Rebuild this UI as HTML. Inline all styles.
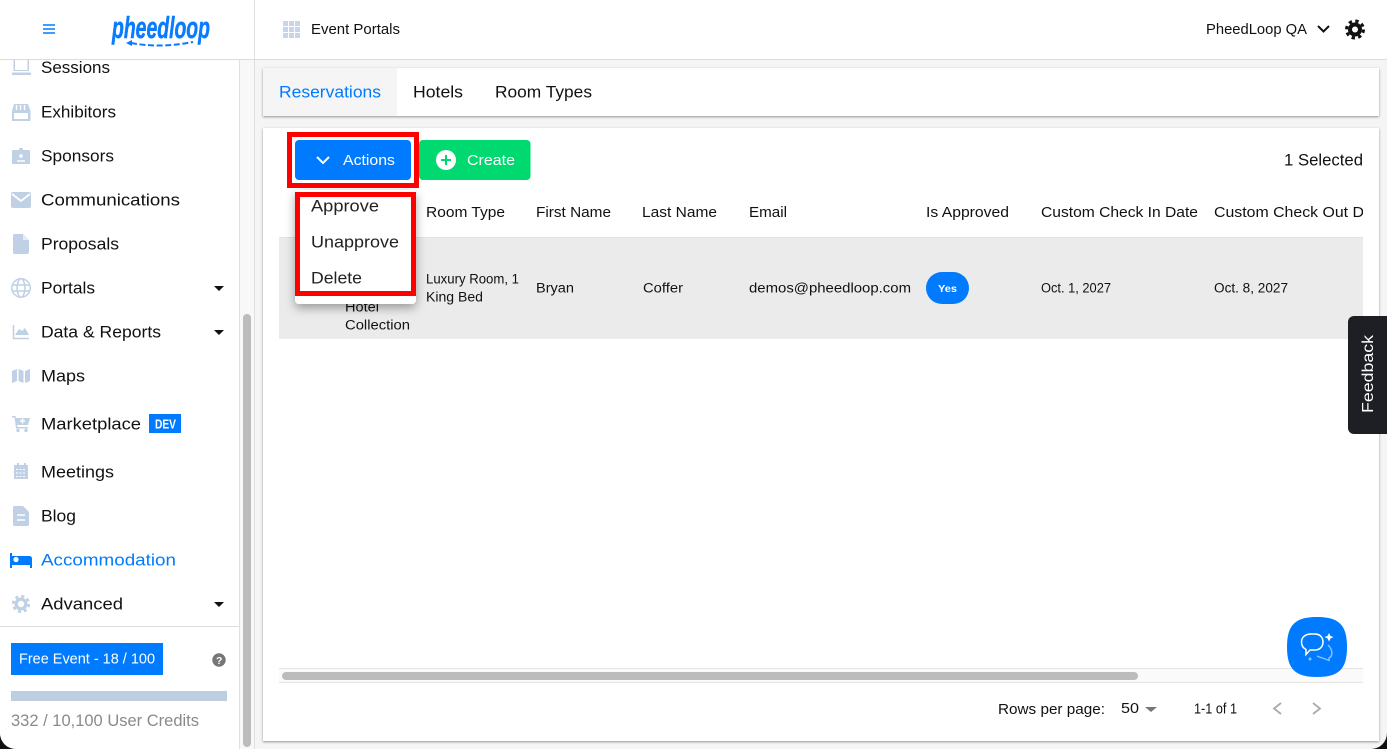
<!DOCTYPE html>
<html><head><meta charset="utf-8"><style>
html,body{margin:0;padding:0;width:1387px;height:749px;overflow:hidden;background:#111}
svg{display:block}
text{font-family:"Liberation Sans",sans-serif;fill:#111}
.n{font-size:16.5px}
.h{font-size:14.5px}
.r{font-size:13.5px}
</style></head><body>
<svg width="1387" height="749" viewBox="0 0 1387 749" xmlns="http://www.w3.org/2000/svg">
<defs>
<filter id="s" x="-5%" y="-20%" width="110%" height="140%"><feDropShadow dx="0" dy="1" stdDeviation="1.2" flood-color="#000" flood-opacity=".4"/></filter>
<filter id="d" x="-30%" y="-30%" width="160%" height="170%"><feDropShadow dx="0" dy="4" stdDeviation="5" flood-color="#000" flood-opacity=".35"/></filter>
<clipPath id="c"><rect x="279" y="190" width="1084" height="40"/></clipPath>
</defs>
<rect x="0" y="0" width="1387" height="749" rx="16" fill="#f5f5f5"/>
<path d="M0 733V0H239V749H16A16 16 0 0 1 0 733Z" fill="#fff"/>
<rect x="239" y="60" width="1" height="689" fill="#e0e0e0"/>
<rect x="240" y="60" width="14" height="689" fill="#f8f8f8"/>
<rect x="254" y="0" width="1" height="749" fill="#e0e0e0"/>
<rect x="243" y="314" width="8" height="433" rx="4" fill="#bcbcbc"/>
<rect x="0" y="0" width="1387" height="59" fill="#fff"/>
<rect x="254" y="0" width="1" height="59" fill="#e0e0e0"/>
<rect x="0" y="59" width="1387" height="1" fill="#dcdcdc"/>
<!-- header -->
<path d="M43 25H55M43 29H55M43 33H55" stroke="#007bff" stroke-width="1.6"/>
<text x="112" y="38" font-size="31" textLength="98" lengthAdjust="spacingAndGlyphs" style="font-style:italic;font-weight:bold;fill:#0a7bff;stroke:#0a7bff;stroke-width:.5">pheedloop</text>
<path d="M131 43C150 46.500 170 46.500 193 42" fill="none" stroke="#0a7bff" stroke-width="2" stroke-dasharray="6 2.6"/>
<path d="M126 43L132 40V46Z" fill="#0a7bff"/>
<g fill="#c6d5ea"><rect x="283" y="21" width="5" height="5"/><rect x="289" y="21" width="5" height="5"/><rect x="295" y="21" width="5" height="5"/><rect x="283" y="27" width="5" height="5"/><rect x="289" y="27" width="5" height="5"/><rect x="295" y="27" width="5" height="5"/><rect x="283" y="33" width="5" height="5"/><rect x="289" y="33" width="5" height="5"/><rect x="295" y="33" width="5" height="5"/></g>
<text class="h" x="311" y="34" textLength="89" lengthAdjust="spacingAndGlyphs">Event Portals</text>
<text class="h" x="1206" y="34" textLength="101" lengthAdjust="spacingAndGlyphs">PheedLoop QA</text>
<path d="M1318 26L1323.500 31.500L1329 26" fill="none" stroke="#111" stroke-width="2"/>
<circle cx="1355" cy="29.500" r="7" fill="#111"/>
<circle cx="1355" cy="29.500" r="8.500" fill="none" stroke="#111" stroke-width="3" stroke-dasharray="3.340 3.340"/>
<circle cx="1355" cy="29.500" r="3" fill="#fff"/>
<!-- side icons -->
<g fill="#c0d0e5">
<path d="M13.500 60H29V71H13.500ZM12 72.500H31V75H12Z"/><rect x="15" y="60" width="12.500" height="10" fill="#fff"/>
<path d="M14 104H28L30.500 111V121H12V111Z"/><rect x="14" y="113" width="14" height="6" fill="#fff"/><path d="M16.500 105V110M20.500 105V110M24.500 105V110" stroke="#fff" stroke-width="1.500"/>
<rect x="12" y="150" width="18" height="14" rx="1"/><rect x="19" y="148" width="4" height="4" rx="1"/>
<rect x="11" y="192" width="20" height="16" rx="2"/><path d="M12 194L21 201L30 194" fill="none" stroke="#fff" stroke-width="1.800"/>
<path d="M15 234H23L29 240V252A2 2 0 0 1 27 254H15A2 2 0 0 1 13 252V236A2 2 0 0 1 15 234Z"/><path d="M23 234V240H29Z" fill="#fff" opacity=".6"/>
<path d="M15 335L19 329L22 331L25 328L29 335Z"/><path d="M13.500 325V338.500H29" fill="none" stroke="#c0d0e5" stroke-width="1.500"/>
<path d="M12 371L17 369V381L12 383ZM18.500 369L23.500 371V383L18.500 381ZM25 371L30 369V381L25 383Z"/>
<path d="M12 416H15.500L16 418H30L28 425H17L17.500 427H28V428.500H16L14.500 417.500H12Z"/><circle cx="18" cy="430.500" r="1.700"/><circle cx="26" cy="430.500" r="1.700"/>
<path d="M14 465H28V479H14Z"/><rect x="17" y="463" width="2" height="4"/><rect x="24" y="463" width="2" height="4"/>
<path d="M15 506H23L29 512V524A2 2 0 0 1 27 526H15A2 2 0 0 1 13 524V508A2 2 0 0 1 15 506Z"/><path d="M17 515H25M17 520H25" stroke="#fff" stroke-width="1.500"/>
</g>
<path d="M16 469.500H26M16 473H26M16 476.500H26" stroke="#fff" stroke-width="1" stroke-dasharray="2 1.500"/>
<circle cx="21" cy="156" r="1.800" fill="#fff"/><path d="M17 161H25" stroke="#fff" stroke-width="1.500"/>
<path d="M20 421H25M22.500 418.500V423.500" stroke="#fff" stroke-width="1.400"/>
<g fill="none" stroke="#c0d0e5" stroke-width="1.500"><circle cx="21" cy="288" r="9.200"/><ellipse cx="21" cy="288" rx="4" ry="9.200"/><path d="M12 285H30M12 291H30"/></g>
<path d="M10 553H12V556H29.500A2.500 2.500 0 0 1 32 558.500V568H30V565H12V568H10Z" fill="#007bff"/>
<circle cx="16" cy="559.500" r="2.600" fill="#fff"/>
<circle cx="21" cy="604" r="6.500" fill="#c0d0e5"/>
<circle cx="21" cy="604" r="7.800" fill="none" stroke="#c0d0e5" stroke-width="2.600" stroke-dasharray="3.060 3.060"/>
<circle cx="21" cy="604" r="3.200" fill="#fff"/>
<!-- side labels -->
<text class="n" x="41" y="73" textLength="69" lengthAdjust="spacingAndGlyphs">Sessions</text>
<text class="n" x="41" y="117.500" textLength="75" lengthAdjust="spacingAndGlyphs">Exhibitors</text>
<text class="n" x="41" y="161.500" textLength="73" lengthAdjust="spacingAndGlyphs">Sponsors</text>
<text class="n" x="41" y="205.500" textLength="139" lengthAdjust="spacingAndGlyphs">Communications</text>
<text class="n" x="41" y="249.500" textLength="78" lengthAdjust="spacingAndGlyphs">Proposals</text>
<text class="n" x="41" y="293.500" textLength="54" lengthAdjust="spacingAndGlyphs">Portals</text>
<text class="n" x="41" y="337.500" textLength="120" lengthAdjust="spacingAndGlyphs">Data &amp; Reports</text>
<text class="n" x="41" y="381.500" textLength="44" lengthAdjust="spacingAndGlyphs">Maps</text>
<text class="n" x="41" y="429.500" textLength="100" lengthAdjust="spacingAndGlyphs">Marketplace</text>
<text class="n" x="41" y="477.500" textLength="73" lengthAdjust="spacingAndGlyphs">Meetings</text>
<text class="n" x="41" y="521.500" textLength="35" lengthAdjust="spacingAndGlyphs">Blog</text>
<text class="n" x="41" y="565.500" textLength="135" lengthAdjust="spacingAndGlyphs" style="fill:#007bff">Accommodation</text>
<text class="n" x="41" y="609.500" textLength="82" lengthAdjust="spacingAndGlyphs">Advanced</text>
<path d="M214 286H224L219 291Z M214 330H224L219 335Z M214 602H224L219 607Z" fill="#111"/>
<rect x="149" y="414" width="32" height="19" fill="#007bff"/>
<text x="155" y="428.500" font-size="13" font-weight="bold" textLength="21" lengthAdjust="spacingAndGlyphs" style="fill:#fff">DEV</text>
<rect x="0" y="626" width="239" height="1" fill="#dedede"/>
<rect x="11" y="643" width="152" height="32" fill="#007bff"/>
<text class="h" x="19" y="663.500" textLength="136" lengthAdjust="spacingAndGlyphs" style="fill:#fff">Free Event - 18 / 100</text>
<circle cx="219" cy="660" r="6.700" fill="#777"/>
<text x="216" y="664" font-size="10.500" font-weight="bold" style="fill:#fff">?</text>
<rect x="11" y="691" width="216" height="10" fill="#bdcde2"/>
<text class="n" x="11" y="726" textLength="188" lengthAdjust="spacingAndGlyphs" style="fill:#8a8a8a">332 / 10,100 User Credits</text>
<!-- tabs -->
<rect x="263" y="68" width="1116" height="48" fill="#fff" filter="url(#s)"/>
<rect x="263" y="68" width="134" height="48" fill="#f5f5f5"/>
<text class="n" x="279" y="97.500" textLength="102" lengthAdjust="spacingAndGlyphs" style="fill:#007bff">Reservations</text>
<text class="n" x="413" y="97.500" textLength="50" lengthAdjust="spacingAndGlyphs">Hotels</text>
<text class="n" x="495" y="97.500" textLength="97" lengthAdjust="spacingAndGlyphs">Room Types</text>
<!-- main card -->
<rect x="263" y="128" width="1116" height="613" fill="#fff" filter="url(#s)"/>
<rect x="279" y="237" width="1084" height="102" fill="#ebebeb"/>
<rect x="279" y="237" width="1084" height="1" fill="#e2e2e2"/>
<text class="n" x="1284" y="165.500" textLength="79" lengthAdjust="spacingAndGlyphs">1 Selected</text>
<rect x="419" y="140" width="111.500" height="40" rx="4" fill="#00d96f"/>
<circle cx="446" cy="160" r="10" fill="#fff"/>
<path d="M441 160H451M446 155V165" stroke="#00d96f" stroke-width="2"/>
<text class="h" x="467" y="165" textLength="48" lengthAdjust="spacingAndGlyphs" style="fill:#fff">Create</text>
<g clip-path="url(#c)">
<text class="h" x="426" y="217" textLength="79" lengthAdjust="spacingAndGlyphs">Room Type</text>
<text class="h" x="536" y="217" textLength="75" lengthAdjust="spacingAndGlyphs">First Name</text>
<text class="h" x="642" y="217" textLength="75" lengthAdjust="spacingAndGlyphs">Last Name</text>
<text class="h" x="749" y="217" textLength="38" lengthAdjust="spacingAndGlyphs">Email</text>
<text class="h" x="926" y="217" textLength="83" lengthAdjust="spacingAndGlyphs">Is Approved</text>
<text class="h" x="1041" y="217" textLength="157" lengthAdjust="spacingAndGlyphs">Custom Check In Date</text>
<text class="h" x="1214" y="217" textLength="172" lengthAdjust="spacingAndGlyphs">Custom Check Out Date</text>
</g>
<text class="r" x="345" y="311.500" textLength="34" lengthAdjust="spacingAndGlyphs">Hotel</text>
<text class="r" x="345" y="329.500" textLength="65" lengthAdjust="spacingAndGlyphs">Collection</text>
<text class="r" x="426" y="283.500" textLength="93" lengthAdjust="spacingAndGlyphs">Luxury Room, 1</text>
<text class="r" x="426" y="301.500" textLength="57" lengthAdjust="spacingAndGlyphs">King Bed</text>
<text class="r" x="536" y="292.500" textLength="38" lengthAdjust="spacingAndGlyphs">Bryan</text>
<text class="r" x="643" y="292.500" textLength="40" lengthAdjust="spacingAndGlyphs">Coffer</text>
<text class="r" x="749" y="292.500" textLength="162" lengthAdjust="spacingAndGlyphs">demos@pheedloop.com</text>
<rect x="926" y="272" width="43" height="32" rx="16" fill="#007bff"/>
<text x="938" y="292" font-size="10.500" font-weight="bold" textLength="19" lengthAdjust="spacingAndGlyphs" style="fill:#fff">Yes</text>
<text class="r" x="1041" y="292.500" textLength="70" lengthAdjust="spacingAndGlyphs">Oct. 1, 2027</text>
<text class="r" x="1214" y="292.500" textLength="74" lengthAdjust="spacingAndGlyphs">Oct. 8, 2027</text>
<!-- dropdown -->
<rect x="295" y="190" width="121" height="114" rx="4" fill="#fff" filter="url(#d)"/>
<text class="n" x="311" y="211.500" textLength="68" lengthAdjust="spacingAndGlyphs" style="fill:#222">Approve</text>
<text class="n" x="311" y="247.500" textLength="88" lengthAdjust="spacingAndGlyphs" style="fill:#222">Unapprove</text>
<text class="n" x="311" y="283.500" textLength="51" lengthAdjust="spacingAndGlyphs" style="fill:#222">Delete</text>
<rect x="297.500" y="194.500" width="116" height="99" fill="none" stroke="#f00" stroke-width="5"/>
<rect x="295" y="140" width="116" height="40" rx="4" fill="#007bff"/>
<path d="M317 157L323 163L329 157" fill="none" stroke="#fff" stroke-width="2"/>
<text class="h" x="343" y="165" textLength="52" lengthAdjust="spacingAndGlyphs" style="fill:#fff">Actions</text>
<rect x="289.500" y="134.500" width="127" height="51" fill="none" stroke="#f00" stroke-width="5"/>
<!-- scroll + footer -->
<rect x="279" y="668" width="1084" height="15" fill="#fafafa"/>
<rect x="279" y="668" width="1084" height="1" fill="#e4e4e4"/>
<rect x="279" y="682" width="1084" height="1" fill="#e4e4e4"/>
<rect x="282" y="672" width="856" height="8" rx="4" fill="#bcbcbc"/>
<text class="h" x="998" y="714" textLength="107" lengthAdjust="spacingAndGlyphs">Rows per page:</text>
<text class="h" x="1121" y="713" textLength="18" lengthAdjust="spacingAndGlyphs">50</text>
<path d="M1145 707H1157L1151 712Z" fill="#777"/>
<text class="h" x="1194" y="713.500" textLength="43" lengthAdjust="spacingAndGlyphs">1-1 of 1</text>
<path d="M1281 703L1274 708.500L1281 714M1313 703L1320 708.500L1313 714" fill="none" stroke="#aaa" stroke-width="1.800"/>
<!-- feedback -->
<path d="M1387 316H1354A6 6 0 0 0 1348 322V428A6 6 0 0 0 1354 434H1387Z" fill="#1e1f24"/>
<text transform="translate(1373 413) rotate(-90)" font-size="16" textLength="78" lengthAdjust="spacingAndGlyphs" style="fill:#fff">Feedback</text>
<!-- chat -->
<path d="M1317 617C1339 617 1347 625 1347 647C1347 669 1339 677 1317 677C1295 677 1287 669 1287 647C1287 625 1295 617 1317 617Z" fill="#007bff"/>
<path d="M1311 634H1315C1320 634 1323 637.500 1323 642C1323 646.500 1320 650 1315 650H1310L1306 654.500V649.500C1303 648 1301.500 645 1301.500 642C1301.500 637.500 1305 634 1311 634Z" fill="none" stroke="#fff" stroke-width="1.500"/>
<path d="M1328 645C1333 650 1333 656 1329 658V660.500L1324 658.500C1322 658 1319 657 1317 656" fill="none" stroke="#8fc2ff" stroke-width="1.400"/>
<path d="M1329 633L1330.500 636L1333.500 637L1330.500 638.500L1329 641.500L1327.500 638.500L1324.500 637L1327.500 636Z" fill="#fff"/>
<circle cx="1310" cy="659" r="1.500" fill="#8fc2ff"/>
</svg>
</body></html>
